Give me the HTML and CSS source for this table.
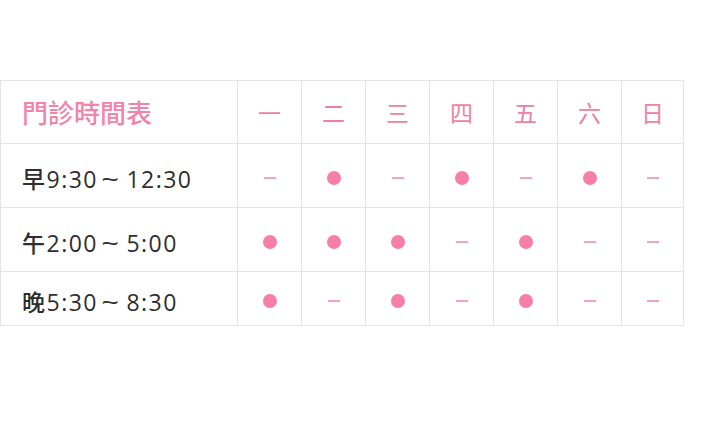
FILE: index.html
```html
<!DOCTYPE html>
<html lang="zh-Hant">
<head>
<meta charset="utf-8">
<link rel="stylesheet" href="styles.css">
</head>
<body>
<table class="schedule">
  <colgroup>
    <col class="c-time">
    <col class="c-day"><col class="c-day"><col class="c-day"><col class="c-day"><col class="c-day"><col class="c-day"><col class="c-last">
  </colgroup>
  <thead>
    <tr class="r-head">
      <th class="title">門診時間表</th>
      <th>一</th><th>二</th><th>三</th><th>四</th><th>五</th><th>六</th><th>日</th>
    </tr>
  </thead>
  <tbody>
    <tr class="r1">
      <td class="time">早9:30<span class="sep">~</span>12:30</td>
      <td><span class="dash"></span></td>
      <td><span class="dot"></span></td>
      <td><span class="dash"></span></td>
      <td><span class="dot"></span></td>
      <td><span class="dash"></span></td>
      <td><span class="dot"></span></td>
      <td><span class="dash"></span></td>
    </tr>
    <tr class="r2">
      <td class="time">午2:00<span class="sep">~</span>5:00</td>
      <td><span class="dot"></span></td>
      <td><span class="dot"></span></td>
      <td><span class="dot"></span></td>
      <td><span class="dash"></span></td>
      <td><span class="dot"></span></td>
      <td><span class="dash"></span></td>
      <td><span class="dash"></span></td>
    </tr>
    <tr class="r3">
      <td class="time">晚5:30<span class="sep">~</span>8:30</td>
      <td><span class="dot"></span></td>
      <td><span class="dash"></span></td>
      <td><span class="dot"></span></td>
      <td><span class="dash"></span></td>
      <td><span class="dot"></span></td>
      <td><span class="dash"></span></td>
      <td><span class="dash"></span></td>
    </tr>
  </tbody>
</table>
</body>
</html>
```
FILE: styles.css
```css
html, body {
  margin: 0;
  padding: 0;
  background: #ffffff;
}
body {
  padding-top: 80px;
  font-family: "Noto Sans CJK TC", "Noto Sans", sans-serif;
}
.schedule {
  border-collapse: collapse;
  table-layout: fixed;
  width: 684px;
}
.c-time { width: 237px; }
.c-day { width: 64px; }
.c-last { width: 62px; }
.schedule th,
.schedule td {
  border: 1px solid #e4e4e4;
  padding: 0;
  text-align: center;
  vertical-align: middle;
}
.schedule th {
  color: #f07fa6;
  font-weight: 400;
  font-size: 23px;
  line-height: 1;
}
.schedule th.title {
  text-align: left;
  padding-left: 21px;
  font-size: 26px;
  font-weight: 500;
  color: #f283aa;
}
.r-head { height: 63px; }
.r1, .r2 { height: 64px; }
.r3 { height: 54px; }
.schedule td.time {
  text-align: left;
  padding-left: 21px;
  padding-top: 4px;
  font-family: "Open Sans", "Noto Sans CJK TC", sans-serif;
  font-size: 23px;
  font-weight: 500;
  letter-spacing: 1.5px;
  color: #2e2e2e;
  white-space: nowrap;
}
.sep {
  display: inline-block;
  margin: 0 7px 0 5px;
  font-size: 26px;
  font-weight: 400;
  line-height: 1;
  transform: scaleX(1.2);
}
.dot {
  display: inline-block;
  width: 14px;
  height: 14px;
  border-radius: 50%;
  background: #f77fa6;
  vertical-align: middle;
}
.dash {
  display: inline-block;
  width: 12px;
  height: 2px;
  background: #f4a3bf;
  vertical-align: middle;
}
```
